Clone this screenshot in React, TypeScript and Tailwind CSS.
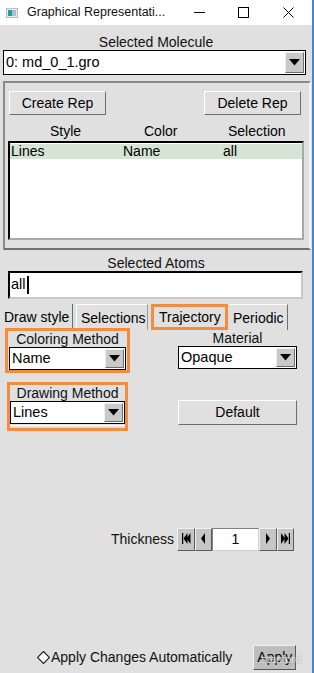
import React from 'react';

const raised =
  'border border-t-white border-l-white border-b-[#6e6e6e] border-r-[#6e6e6e] bg-[#e0e0e0]';

function Arrow() {
  return (
    <div className="w-[19px] self-stretch flex items-center justify-center bg-[#c9c9c9] border border-t-[#f0f0f0] border-l-[#f0f0f0] border-b-[#6e6e6e] border-r-[#6e6e6e] m-[1px]">
      <svg width="11" height="7" viewBox="0 0 11 7">
        <polygon points="0,0 11,0 5.5,6.5" fill="#000" />
      </svg>
    </div>
  );
}

function Dropdown({ value, className }: { value: string; className: string }) {
  return (
    <div className={`flex items-stretch bg-white border border-black ${className}`}>
      <div className="flex-1 flex items-center pl-[2px] leading-none">{value}</div>
      <Arrow />
    </div>
  );
}

function Tri({ dir, double }: { dir: 'l' | 'r'; double?: boolean }) {
  const one = dir === 'l' ? '4,0 4,11 0,5.5' : '0,0 0,11 4,5.5';
  return (
    <svg width={double ? 9 : 5} height="12" viewBox={`0 0 ${double ? 9 : 5} 12`}>
      {double && dir === 'l' && <rect x="0" y="0" width="1.2" height="11" fill="#000" />}
      <polygon points={one} fill="#000" transform={double ? (dir === 'l' ? 'translate(1.5,0)' : 'translate(0,0)') : ''} />
      {double && <polygon points={one} fill="#000" transform={dir === 'l' ? 'translate(4.5,0)' : 'translate(3.5,0)'} />}
      {double && dir === 'r' && <rect x="7.8" y="0" width="1.2" height="11" fill="#000" />}
    </svg>
  );
}

function StepBtn({ children, w }: { children: React.ReactNode; w: string }) {
  return (
    <div className={`${w} h-[23px] flex items-center justify-center bg-[#c6c6c6] border border-t-[#f0f0f0] border-l-[#f0f0f0] border-b-[#5a5a5a] border-r-[#5a5a5a]`}>
      {children}
    </div>
  );
}

export default function App() {
  return (
    <div
      className="w-[314px] h-[673px] bg-[#e0e0e0] overflow-hidden text-[14px] text-black flex flex-col border-r-2 border-r-[#3c8ad6]"
      style={{ fontFamily: '"Liberation Sans", Arial, sans-serif' }}
    >
      {/* title bar */}
      <div className="h-[25px] bg-white flex items-center shrink-0">
        <svg className="ml-[6px]" width="12" height="10" viewBox="0 0 12 10">
          <rect x="0" y="0" width="12" height="10" fill="#e8ecef" stroke="#8a9aa8" strokeWidth="1" />
          <rect x="2" y="2" width="4" height="6" fill="#2e9a8a" />
          <rect x="6" y="2" width="4" height="6" fill="#9cc6d8" />
        </svg>
        <span className="ml-[9px] text-[12.5px] text-[#111]" style={{ fontFamily: '"Segoe UI", "Liberation Sans", sans-serif' }}>
          Graphical Representati...
        </span>
        <div className="ml-auto flex items-center">
          <div className="w-[11px] h-[1px] bg-black mr-[33px]" />
          <div className="w-[11px] h-[11px] border border-black mr-[34px]" />
          <svg className="mr-[18px]" width="11" height="11" viewBox="0 0 11 11">
            <path d="M0.5 0.5 L10.5 10.5 M10.5 0.5 L0.5 10.5" stroke="#000" strokeWidth="1" />
          </svg>
        </div>
      </div>

      {/* selected molecule */}
      <div className="pt-[9px] text-center leading-[16px] text-[#111]">Selected Molecule</div>
      <Dropdown value="0: md_0_1.gro" className="ml-[3px] w-[303px] h-[25px] text-[14.5px]" />

      {/* rep frame */}
      <div className="ml-[3px] mt-[6px] w-[308px] border-2 border-t-[#8a8a8a] border-l-[#8a8a8a] border-b-[#707070] border-r-[#f4f4f4] pt-[8px] pb-[8px]">
        <div className="flex justify-between pl-[4px] pr-[8px]">
          <button className={`w-[97px] h-[24px] ${raised} flex items-center justify-center`}>Create Rep</button>
          <button className={`w-[97px] h-[24px] ${raised} flex items-center justify-center`}>Delete Rep</button>
        </div>
        <div className="mt-[8px] h-[16px] leading-[16px] relative">
          <span className="absolute left-[45px]">Style</span>
          <span className="absolute left-[139px]">Color</span>
          <span className="absolute left-[223px]">Selection</span>
        </div>
        <div className="ml-[3px] mt-[2px] w-[296px] h-[99px] bg-white border-2 border-t-black border-l-black border-b-[#a8a8a8] border-r-[#a8a8a8] pt-[1px]">
          <div className="h-[15px] bg-[#d5e4d5] relative leading-[15px]">
            <span className="absolute left-[1px]">Lines</span>
            <span className="absolute left-[113px]">Name</span>
            <span className="absolute left-[213px]">all</span>
          </div>
        </div>
      </div>

      {/* selected atoms */}
      <div className="mt-[5px] text-center leading-[16px] text-[#111]">Selected Atoms</div>
      <div className="ml-[8px] w-[295px] h-[28px] bg-white border-2 border-t-black border-l-black border-b-[#c8c8c8] border-r-[#c8c8c8] flex items-center pl-[1px]">
        <span className="text-[14.5px]">all</span>
        <div className="w-[2px] h-[18px] bg-black ml-[1px]" />
      </div>

      {/* tabs */}
      <div className="mt-[5px] h-[26px] flex items-stretch">
        <div className="pl-[4px] w-[73px] border-r border-r-[#6e6e6e] flex items-center leading-none">Draw style</div>
        <div className="ml-[3px] w-[72px] border-l border-l-white border-t border-t-white border-r border-r-[#9a9a9a] flex items-center pl-[4px] leading-none">Selections</div>
        <div className="ml-[3px] w-[77px] border-[3px] border-[#f28c3e] flex items-center pl-[5px] leading-none">Trajectory</div>
        <div className="ml-[1px] w-[59px] border-t border-t-white border-r border-r-[#6e6e6e] flex items-center pl-[4px] leading-none">Periodic</div>
      </div>

      {/* draw style panel */}
      <div className="flex mt-[-2px]">
        <div className="ml-[5px] w-[125px] flex flex-col">
          <div className="h-[45px] border-[3px] border-[#f28c3e] flex flex-col items-center">
            <div className="leading-[16px] text-[#111]">Coloring Method</div>
            <Dropdown value="Name" className="w-[117px] h-[23px] text-[14.5px]" />
          </div>
          <div className="ml-[2px] mt-[9px] w-[121px] h-[49px] border-[3px] border-[#f28c3e] flex flex-col items-center">
            <div className="leading-[16px] text-[#111]">Drawing Method</div>
            <Dropdown value="Lines" className="w-[115px] h-[23px] text-[14.5px]" />
            <div className="w-[115px] h-[1px] bg-white mt-[1px]" />
          </div>
        </div>
        <div className="ml-[48px] w-[119px] flex flex-col items-center pt-[2px]">
          <div className="leading-[16px] text-[#111]">Material</div>
          <Dropdown value="Opaque" className="w-[119px] h-[23px] text-[14.5px]" />
          <button className={`mt-[31px] w-[119px] h-[25px] ${raised} flex items-center justify-center`}>Default</button>
        </div>
      </div>

      {/* thickness */}
      <div className="mt-[96px] flex items-center justify-end pr-[18px] h-[24px]">
        <span className="mr-[3px] text-[#111]">Thickness</span>
        <StepBtn w="w-[18px]"><Tri dir="l" double /></StepBtn>
        <StepBtn w="w-[17px]"><Tri dir="l" /></StepBtn>
        <div className="w-[47px] h-[23px] bg-white border border-t-[#808080] border-l-[#808080] border-b-[#d0d0d0] border-r-[#d0d0d0] flex items-center justify-center">1</div>
        <StepBtn w="w-[18px]"><Tri dir="r" /></StepBtn>
        <StepBtn w="w-[17px]"><Tri dir="r" double /></StepBtn>
      </div>

      {/* bottom */}
      <div className="mt-auto mb-[3px] flex items-center h-[25px]">
        <svg className="ml-[37px]" width="13" height="13" viewBox="0 0 13 13">
          <polygon points="6.5,0.5 12.5,6.5 6.5,12.5 0.5,6.5" fill="#fff" stroke="#222" strokeWidth="1.2" />
        </svg>
        <span className="ml-[1px] text-[14px] text-[#111]">Apply Changes Automatically</span>
        <div className="relative ml-[21px]">
          <button className={`w-[43px] h-[25px] bg-[#bdbdbd] border border-t-[#f0f0f0] border-l-[#f0f0f0] border-b-[#555] border-r-[#555] flex items-center justify-center`}>Apply</button>
          <span className="absolute left-[8px] top-[6px] text-[11px] text-white/70 pointer-events-none" style={{ textShadow: '0 0 2px #999' }}>stanford</span>
        </div>
      </div>
    </div>
  );
}
